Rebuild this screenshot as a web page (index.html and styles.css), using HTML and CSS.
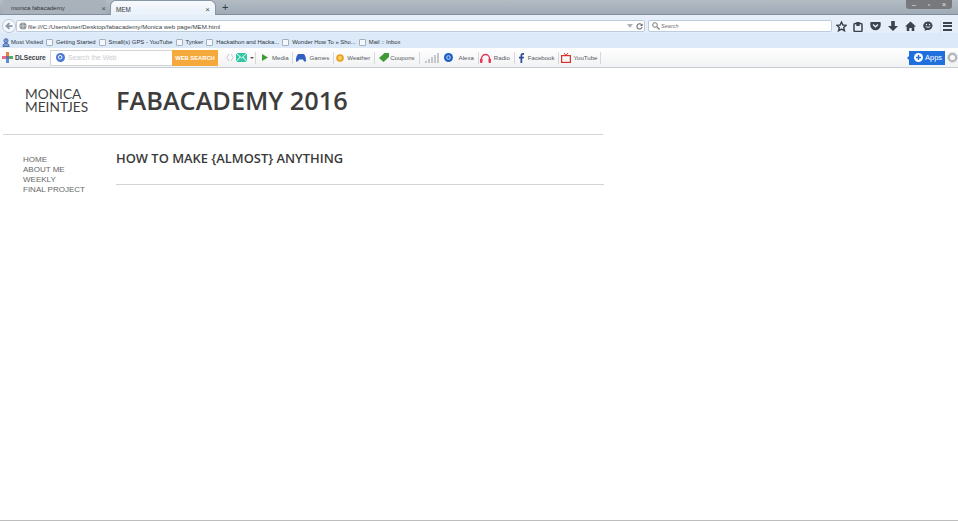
FILE: index.html
```html
<!DOCTYPE html>
<html lang="en">
<head>
<meta charset="utf-8">
<title>MEM</title>
<link rel="stylesheet" href="styles.css">
</head>
<body>
<div class="browser">
  <div class="tabstrip">
    <div class="tab inactive"><span class="tab-label">monica fabacademy</span><span class="tab-x">×</span></div>
    <div class="tab active"><span class="tab-label">MEM</span><span class="tab-x">×</span></div>
    <span class="newtab">+</span>
    <div class="winctl"><span>–</span><span>▫</span><span>×</span></div>
  </div>
  <div class="navbar">
    <svg class="back" width="14" height="14" viewBox="0 0 16 16"><circle cx="8" cy="8" r="7.5" fill="#f4f7fb" stroke="#b4c2d2"/><path d="M12 8H6M8.500 4.800 5 8l3.500 3.200" fill="none" stroke="#8b97a5" stroke-width="2"/></svg>
    <div class="urlbar">
      <svg width="8" height="8" viewBox="0 0 9 9"><circle cx="4.500" cy="4.500" r="4" fill="#8d939b"/><path d="M1 4.500h7M4.500 .5v8" stroke="#e4e6e9" stroke-width=".7"/></svg>
      <span class="url">file:///C:/Users/user/Desktop/fabacademy/Monica web page/MEM.html</span>
      <span class="url-tri"></span>
      <svg width="7" height="7" viewBox="0 0 8 8"><path d="M6.700 2.500A3 3 0 1 0 7 4.500" fill="none" stroke="#666" stroke-width="1.200"/><path d="M7.500 .5v3h-3z" fill="#666"/></svg>
    </div>
    <div class="searchbar">
      <svg width="8" height="8" viewBox="0 0 8 8"><circle cx="3" cy="3" r="2.300" fill="none" stroke="#777"/><path d="m5 5 2.500 2.500" stroke="#777" stroke-width="1.200"/></svg>
      <span>Search</span>
    </div>
    <div class="navicons">
      <svg class="star" width="11" height="11" viewBox="0 0 12 12"><path d="m6 1 1.500 3.400 3.700.3-2.800 2.400.9 3.600L6 8.800l-3.300 1.900.9-3.600L.8 4.700l3.700-.3z" fill="none" stroke="#3a4350" stroke-width="1.500"/></svg>
      <svg width="10" height="11" viewBox="0 0 10 11"><rect x="1" y="2.500" width="8" height="8" rx="1" fill="none" stroke="#3a4350" stroke-width="1.500"/><rect x="3.300" y="1" width="3.400" height="4" fill="#3a4350"/></svg>
      <svg width="11" height="10" viewBox="0 0 11 10"><path d="M1 1h9a.7.7 0 0 1 .7.7V4a5.200 5.200 0 0 1-10.400 0V1.700A.7.7 0 0 1 1 1z" fill="#3a4350"/><path d="m3 3.500 2.500 2.300L8 3.500" fill="none" stroke="#e9f0f8" stroke-width="1.300"/></svg>
      <svg width="10" height="11" viewBox="0 0 10 11"><path d="M3.200 0h3.600v5H10L5 10 0 5h3.200z" fill="#3a4350"/></svg>
      <svg width="11" height="10" viewBox="0 0 11 10"><path d="M5.500.5 11 5.500H9.300V10H6.700V7H4.300v3H1.700V5.500H0z" fill="#3a4350"/></svg>
      <svg width="10" height="10" viewBox="0 0 10 10"><path d="M5 .5a4.500 4.200 0 0 1 0 8.400H3.500L1.500 10l.5-2A4.500 4.200 0 0 1 5 .5z" fill="#3a4350"/><path d="M2.500 5.200c1.500 1.400 3.500 1.400 5 0" fill="none" stroke="#e9f0f8"/><circle cx="3.500" cy="3.500" r=".7" fill="#e9f0f8"/><circle cx="6.500" cy="3.500" r=".7" fill="#e9f0f8"/></svg>
      <span class="nav-sep"></span>
      <span class="hamburger"><i></i><i></i><i></i></span>
    </div>
  </div>
  <div class="bookmarks">
    <div class="bm bm-first"><svg width="8" height="9" viewBox="0 0 9 10"><circle cx="4.500" cy="3" r="2.300" fill="#7c9fd6" stroke="#3f66a8"/><path d="M1 9.500c0-5 7-5 7 0z" fill="#7c9fd6" stroke="#3f66a8"/></svg>Most Visited</div>
    <div class="bm"><span class="page"></span>Getting Started</div>
    <div class="bm"><span class="page"></span>Small(s) GPS - YouTube</div>
    <div class="bm"><span class="page"></span>Tynker</div>
    <div class="bm"><span class="page"></span>Hackathon and Hacka...</div>
    <div class="bm"><span class="page"></span>Wonder How To » Sho...</div>
    <div class="bm"><span class="page"></span>Mail :: Inbox</div>
  </div>
  <div class="addon">
    <div class="dl-logo">
      <svg width="11" height="11" viewBox="0 0 11 11"><rect x="4" width="3" height="4" fill="#e8823a"/><rect y="4" width="4" height="3" fill="#e86a8a"/><rect x="7" y="4" width="4" height="3" fill="#4fb06a"/><rect x="4" y="7" width="3" height="4" fill="#5a8fd8"/><rect x="4" y="4" width="3" height="3" fill="#7a6aa8"/></svg>
      <span>DLSecure</span>
    </div>
    <div class="websearch">
      <div class="ws-field">
        <svg width="9" height="9" viewBox="0 0 9 9"><circle cx="4.500" cy="4.500" r="4.500" fill="#4b78d8"/><circle cx="4.200" cy="4.200" r="1.800" fill="none" stroke="#fff"/></svg>
        <span>Search the Web</span>
      </div>
      <div class="ws-btn">WEB SEARCH</div>
    </div>
    <svg class="code" width="8" height="9" viewBox="0 0 8 9"><path d="M3 1 .8 4.500 3 8M5 1l2.200 3.500L5 8" fill="none" stroke="#c8ccd0"/></svg>
    <svg class="mail" width="11" height="9" viewBox="0 0 11 9"><rect width="11" height="9" fill="#35c4a4"/><path d="m0 0 5.500 5L11 0M0 9l4-5M11 9 7 4" fill="none" stroke="#e8fff8"/></svg>
    <span class="caret"></span>
    <div class="item media"><svg width="6" height="7" viewBox="0 0 6 7"><path d="M0 0v7l6-3.500z" fill="#3f9a35"/></svg>Media</div>
    <div class="item games"><svg width="10" height="8" viewBox="0 0 10 8"><path d="M2.500 0h5C9 0 10 4 10 6.500 10 8.500 8 8 7 5.500H3C2 8 0 8.500 0 6.500 0 4 1 0 2.500 0z" fill="#2f5fc0"/></svg>Games</div>
    <div class="item weather"><svg width="8" height="8" viewBox="0 0 8 8"><circle cx="4" cy="4" r="3.800" fill="#e8a020"/><circle cx="4" cy="4" r="2" fill="#f8d060"/></svg>Weather</div>
    <div class="item coupons"><svg width="10" height="9" viewBox="0 0 10 9"><path d="M5.500 0H10v4L4.500 9 0 5z" fill="#3f9a35"/></svg>Coupons</div>
    <div class="item alexa">
      <svg class="bars" width="15" height="10" viewBox="0 0 15 10"><path d="M0 8h2v2H0zM3 6h2v4H3zM6 4h2v6H6zM9 2h2v8H9zM12 0h2v10h-2z" fill="#c4c8cc"/></svg>
      <svg class="alexa-i" width="9" height="9" viewBox="0 0 9 9"><circle cx="4.500" cy="4.500" r="4.500" fill="#1f5fc4"/><circle cx="4.500" cy="4.500" r="1.800" fill="none" stroke="#cfe0f8"/></svg>
      <span>Alexa</span>
    </div>
    <div class="item radio"><svg width="11" height="10" viewBox="0 0 11 10"><path d="M1.500 7V5.500a4 4 0 0 1 8 0V7" fill="none" stroke="#e8365a" stroke-width="1.300"/><rect y="5.500" width="2.500" height="4.500" rx="1" fill="#e8365a"/><rect x="8.500" y="5.500" width="2.500" height="4.500" rx="1" fill="#e8365a"/></svg>Radio</div>
    <div class="item facebook"><svg width="5" height="10" viewBox="0 0 5 10"><path d="M1.500 10V5.500H0V3.800h1.500V2.500C1.500 1 2.300 0 4 0h1v1.800H4c-.6 0-.8.300-.8.800v1.200H5l-.3 1.700H3.200V10z" fill="#2a4a94"/></svg>Facebook</div>
    <div class="item youtube"><svg width="10" height="10" viewBox="0 0 10 10"><rect x=".6" y="2.600" width="8.800" height="6.800" fill="none" stroke="#d8322a" stroke-width="1.200"/><path d="M3 0l2 2.500L7 0" fill="none" stroke="#d8322a"/></svg>YouTube</div>
    <div class="apps-group">
      <div class="apps">
        <svg width="9" height="9" viewBox="0 0 9 9"><circle cx="4.500" cy="4.500" r="4.500" fill="#fff"/><path d="M4.500 2v5M2 4.500h5" stroke="#1f6fdc" stroke-width="1.400"/></svg>
        <span>Apps</span>
      </div>
      <svg width="11" height="11" viewBox="0 0 12 12"><circle cx="6" cy="6" r="4" fill="none" stroke="#b4b8bc" stroke-width="2.400"/><circle cx="6" cy="6" r="5.500" fill="none" stroke="#c8ccd0" stroke-width="1" stroke-dasharray="2 1"/></svg>
    </div>
  </div>
  <main class="page-content">
    <header class="site-head">
      <div class="site-name">MONICA<br>MEINTJES</div>
      <h1>FABACADEMY 2016</h1>
    </header>
    <div class="columns">
      <ul class="site-nav">
        <li>HOME</li>
        <li>ABOUT ME</li>
        <li>WEEKLY</li>
        <li>FINAL PROJECT</li>
      </ul>
      <section class="intro"><h2>HOW TO MAKE {ALMOST} ANYTHING</h2></section>
    </div>
  </main>
</div>
</body>
</html>
```
FILE: styles.css
```css
* { box-sizing: border-box; }
html, body { margin: 0; padding: 0; height: 100%; background: #fff; overflow: hidden; }
body { font-family: "Liberation Sans", Arial, sans-serif; }
svg { flex: none; display: block; }
.browser { display: flex; flex-direction: column; width: 958px; height: 521px; border-bottom: 1px solid #bdbdbd; }

.tabstrip { height: 15px; flex: none; display: flex; align-items: flex-end; padding-left: 3px; background: linear-gradient(#b4bcc4, #9eaab6); border-bottom: 1px solid #7f8c99; position: relative; }
.tab { height: 14px; padding-top: 2px; display: flex; align-items: center; justify-content: space-between; font-size: 6px; color: #2f3337; }
.tab.inactive { width: 103px; padding-left: 8px; padding-right: 0; background: #a9b2bb; }
.tab.active { width: 106px; height: 15px; margin-left: 4px; margin-bottom: -1px; padding-left: 5px; padding-right: 5px; background: linear-gradient(#f6f9fc, #e9f1fa); border-radius: 6px 6px 0 0; border: 1px solid #8895a2; border-bottom: 0; font-size: 6.300px; }
.tab-x { font-size: 8px; color: #4a4f55; }
.newtab { margin-left: 6px; font-size: 11px; line-height: 14px; color: #333c46; }
.winctl { position: absolute; top: 0; right: 6px; width: 46px; height: 9px; display: flex; justify-content: space-around; align-items: center; background: #77797c; border-radius: 0 0 3px 3px; color: #eee; font-size: 7px; line-height: 9px; }

.navbar { height: 18px; flex: none; display: flex; align-items: center; padding: 4px 0 0 2px; background: #e6eff9; }
.urlbar { width: 629px; height: 12px; display: flex; align-items: center; padding: 0 1px 0 2px; background: #fff; border: 1px solid #bccbdc; border-radius: 2px; font-size: 6.200px; color: #3a3f46; }
.url { flex: 1; padding-left: 1px; }
.url-tri { width: 0; height: 0; margin-right: 3px; border: 3px solid transparent; border-top: 4px solid #aab2ba; border-bottom: 0; }
.searchbar { width: 184px; height: 12px; margin-left: 3px; display: flex; align-items: center; gap: 1px; padding-left: 3px; background: #fff; border: 1px solid #bccbdc; border-radius: 2px; font-size: 5.600px; font-style: italic; color: #777; }
.navicons { display: flex; align-items: center; gap: 7px; margin-left: 4px; }
.star { margin-right: -1px; }
.nav-sep { width: 1px; height: 13px; margin-right: -5px; background: #d3deea; }
.hamburger { display: flex; flex-direction: column; gap: 1.500px; width: 9px; }
.hamburger i { display: block; height: 2px; background: #3a4350; }

.bookmarks { height: 15px; flex: none; display: flex; align-items: center; gap: 3px; padding: 3px 0 0 2px; background: #dbe9f9; font-size: 5.900px; color: #2f343a; }
.bm { display: flex; align-items: center; gap: 3px; white-space: nowrap; }
.bm-first { gap: 1px; }
.page { width: 7px; height: 7px; background: #f4f8fd; border: 1px solid #a6b0bb; border-radius: 1px; }

.addon { height: 20px; flex: none; display: flex; align-items: center; background: linear-gradient(#fff, #f1f2f3); border-bottom: 1px solid #c9ccd4; font-size: 6.100px; color: #55595e; }
.dl-logo { display: flex; align-items: center; gap: 2px; width: 50px; padding-left: 2px; font-size: 6.600px; font-weight: bold; color: #3a4048; }
.websearch { display: flex; width: 168px; height: 16px; border: 1px solid #d2d4d6; border-right: 0; background: #fff; }
.ws-field { flex: 1; display: flex; align-items: center; gap: 3px; padding-left: 5px; font-size: 6.800px; color: #c8ccd0; }
.ws-btn { width: 46px; margin: -1px 0; display: flex; align-items: center; justify-content: center; background: #f5a93a; color: #fff; font-size: 5.800px; font-weight: bold; }
.code { margin-left: 8px; }
.mail { margin-left: 2px; }
.caret { margin: 0 1px 0 3px; width: 0; height: 0; border: 2px solid transparent; border-top: 2px solid #555; border-bottom: 0; }
.item { display: flex; align-items: center; height: 12px; border-left: 1px solid #d6d8da; white-space: nowrap; }
.media { gap: 4px; padding: 0 3px 0 6px; }
.games { gap: 4px; padding: 0 4px 0 3px; }
.weather { gap: 3px; padding: 0 4px 0 2px; }
.coupons { gap: 1px; padding: 0 4px 0 4px; }
.alexa { gap: 4px; padding: 0 4px 0 5px; }
.alexa span { margin-left: 2px; }
.radio { gap: 3px; padding: 0 4px 0 1px; }
.facebook { gap: 4px; padding: 0 3px 0 4px; }
.youtube { gap: 3px; padding: 0 3px 0 2px; border-right: 1px solid #d6d8da; }
.apps-group { display: flex; align-items: center; gap: 2px; margin-left: auto; }
.apps { position: relative; width: 36px; height: 14px; display: flex; align-items: center; gap: 2px; padding-left: 5px; background: #1f6fdc; color: #fff; font-size: 7.500px; }
.apps::before { content: ""; position: absolute; left: -2px; top: 5px; border: 2px solid transparent; border-left: 0; border-right-color: #1f6fdc; }

.page-content { flex: 1; padding-left: 3px; }
.site-head { width: 600px; height: 67px; display: flex; align-items: center; border-bottom: 1px solid #d4d4d4; }
.site-name { width: 113px; padding-left: 22px; font-family: "Lato", sans-serif; font-size: 13.700px; line-height: 13px; color: #3f3f3f; margin-top: -3px; }
h1 { margin: -2px 0 0; font-family: "Open Sans", sans-serif; font-size: 25.300px; font-weight: 600; color: #3d3d3d; white-space: nowrap; }
.columns { display: flex; width: 601px; }
.site-nav { list-style: none; margin: 20px 0 0; padding: 0 0 0 20px; width: 113px; font-size: 8px; line-height: 10px; color: #666; }
.intro { flex: 1; height: 50px; border-bottom: 1px solid #d4d4d4; }
h2 { margin: 14px 0 0; font-family: "Open Sans", sans-serif; font-size: 12.900px; line-height: 18px; font-weight: 600; color: #3a3a3a; white-space: nowrap; }
```
